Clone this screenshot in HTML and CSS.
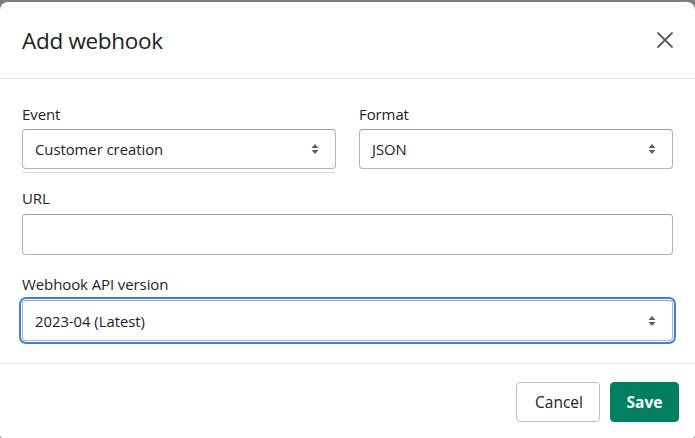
FILE: index.html
```html
<!DOCTYPE html>
<html>
<head>
<meta charset="utf-8">
<link rel="stylesheet" href="styles.css">
</head>
<body>
<div class="modal">
  <div class="header">
    <h1 class="title">Add webhook</h1>
    <button class="close" aria-label="Close">
      <svg width="20" height="20" viewBox="0 0 20 20"><path d="M3 3 L17 17 M17 3 L3 17" stroke="#5c5f62" stroke-width="1.8" fill="none" stroke-linecap="round"/></svg>
    </button>
  </div>
  <div class="body">
    <div class="row">
      <div class="field">
        <label class="label">Event</label>
        <div class="select">
          <span>Customer creation</span>
          <svg class="arrows" width="8" height="12" viewBox="0 0 8 12"><path d="M4 1 L7.5 5 H0.5 Z M4 11 L7.5 7 H0.5 Z" fill="#5c5f62"/></svg>
        </div>
        <div class="underline"></div>
      </div>
      <div class="field">
        <label class="label">Format</label>
        <div class="select">
          <span>JSON</span>
          <svg class="arrows" width="8" height="12" viewBox="0 0 8 12"><path d="M4 1 L7.5 5 H0.5 Z M4 11 L7.5 7 H0.5 Z" fill="#5c5f62"/></svg>
        </div>
      </div>
    </div>
    <div class="field">
      <label class="label">URL</label>
      <div class="input"></div>
    </div>
    <div class="field">
      <label class="label">Webhook API version</label>
      <div class="select focused">
        <span>2023-04 (Latest)</span>
        <svg class="arrows" width="8" height="12" viewBox="0 0 8 12"><path d="M4 1 L7.5 5 H0.5 Z M4 11 L7.5 7 H0.5 Z" fill="#5c5f62"/></svg>
      </div>
    </div>
  </div>
  <div class="footer">
    <button class="btn">Cancel</button>
    <button class="btn primary">Save</button>
  </div>
</div>
</body>
</html>
```
FILE: styles.css
```css
* { box-sizing: border-box; }
html, body { margin: 0; padding: 0; }
body {
  background: #7f7f7f;
  font-family: "Open Sans", "Noto Sans", sans-serif;
  color: #202223;
  width: 695px;
  height: 438px;
  overflow: hidden;
}
.modal {
  margin-top: 2px;
  height: 436px;
  background: #fff;
  border-radius: 8px 8px 3px 3px;
  display: flex;
  flex-direction: column;
}
.header {
  height: 77px;
  border-bottom: 1px solid #e1e3e5;
  display: flex;
  align-items: center;
  justify-content: space-between;
  padding: 0 20px 0 22px;
}
.title {
  margin: 0;
  font-size: 22.5px;
  font-weight: 400;
  letter-spacing: -0.3px;
}
.close {
  background: none;
  border: 0;
  padding: 0;
  width: 20px;
  height: 20px;
  display: flex;
}
.body {
  padding: 25px 22px 22px 22px;
  display: flex;
  flex-direction: column;
  gap: 19px;
  border-bottom: 1px solid #e1e3e5;
}
.row {
  display: flex;
  gap: 23px;
}
.row .field { flex: 1; position: relative; }
.field { display: flex; flex-direction: column; }
.label {
  font-size: 15px;
  line-height: 20px;
  margin-bottom: 5px;
  letter-spacing: -0.1px;
}
.select, .input {
  height: 40px;
  border: 1px solid #aeb4b9;
  border-top-color: #999ea4;
  border-radius: 4px;
  display: flex;
  align-items: center;
  justify-content: space-between;
  padding: 0 16px 0 12px;
  font-size: 14.8px;
  background: #fff;
}
.input { height: 41px; margin-top: 1px; }
.underline {
  position: absolute;
  left: 0;
  right: 1px;
  bottom: -4px;
  height: 1px;
  background: #d4dbe2;
}
.focused {
  outline: 2px solid #3d7fe0;
  outline-offset: 1px;
  height: 41px;
  margin-top: 1px;
}
.footer {
  display: flex;
  justify-content: flex-end;
  gap: 10px;
  padding: 18px 16px 0 0;
}
.btn {
  font-family: "Open Sans", "Noto Sans", sans-serif;
  height: 40px;
  border-radius: 4px;
  border: 1px solid #babfc3;
  background: #fff;
  color: #202223;
  font-size: 15.5px;
  padding: 0 18px;
  width: 84px;
}
.btn.primary {
  background: #008060;
  border-color: #008060;
  color: #fff;
  font-weight: 700;
  width: 69px;
  padding: 0;
}
```
